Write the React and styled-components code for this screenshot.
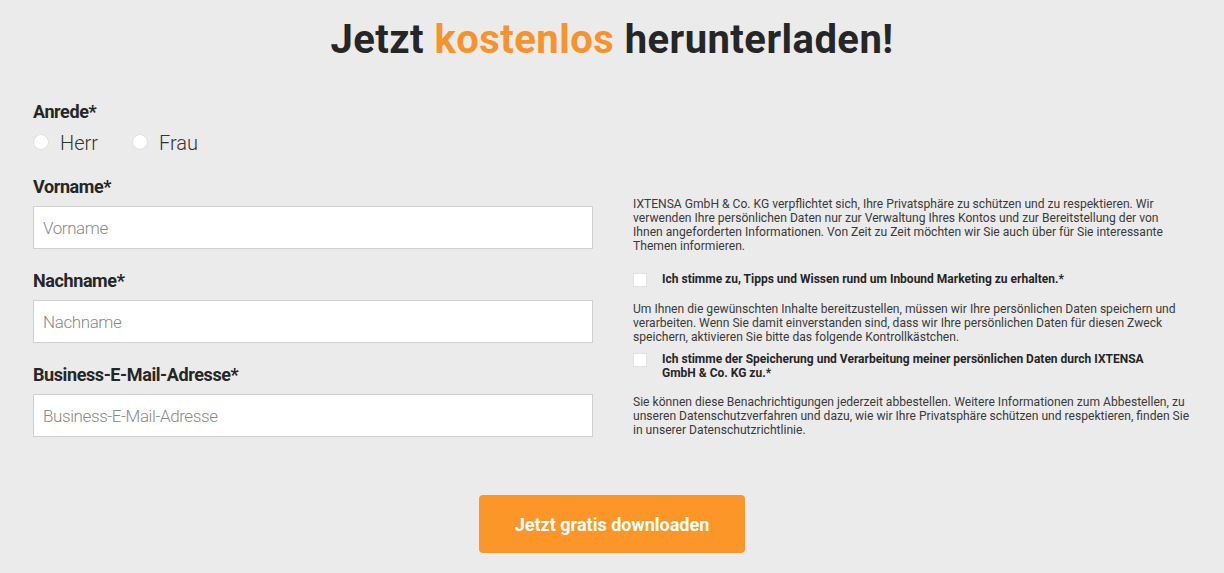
import styled, { createGlobalStyle } from 'styled-components'

const GlobalStyle = createGlobalStyle`
  html, body {
    margin: 0;
    padding: 0;
    background: #ebebeb;
  }
  body {
    font-family: Roboto, "Liberation Sans", sans-serif;
    color: #262626;
  }
`

function App() {
  return (
    <Page>
      <GlobalStyle />
      <Title>
        Jetzt <Accent>kostenlos</Accent> herunterladen!
      </Title>
      <Form>
        <Columns>
          <LeftColumn>
            <Field>
              <Label>Anrede*</Label>
              <RadioGroup>
                <RadioOption>
                  <Radio />
                  Herr
                </RadioOption>
                <RadioOption>
                  <Radio />
                  Frau
                </RadioOption>
              </RadioGroup>
            </Field>
            <Field>
              <Label>Vorname*</Label>
              <Input placeholder="Vorname" />
            </Field>
            <Field>
              <Label>Nachname*</Label>
              <Input placeholder="Nachname" />
            </Field>
            <Field>
              <Label>Business-E-Mail-Adresse*</Label>
              <Input placeholder="Business-E-Mail-Adresse" />
            </Field>
          </LeftColumn>
          <RightColumn>
            <Legal $after={19}>
              IXTENSA GmbH &amp; Co. KG verpflichtet sich, Ihre Privatsphäre zu schützen und zu respektieren. Wir
              verwenden Ihre persönlichen Daten nur zur Verwaltung Ihres Kontos und zur Bereitstellung der von Ihnen
              angeforderten Informationen. Von Zeit zu Zeit möchten wir Sie auch über für Sie interessante Themen
              informieren.
            </Legal>
            <Consent>
              <Checkbox />
              <ConsentText>Ich stimme zu, Tipps und Wissen rund um Inbound Marketing zu erhalten.*</ConsentText>
            </Consent>
            <Legal $after={8}>
              Um Ihnen die gewünschten Inhalte bereitzustellen, müssen wir Ihre persönlichen Daten speichern und
              verarbeiten. Wenn Sie damit einverstanden sind, dass wir Ihre persönlichen Daten für diesen Zweck
              speichern, aktivieren Sie bitte das folgende Kontrollkästchen.
            </Legal>
            <Consent>
              <Checkbox />
              <ConsentText>
                Ich stimme der Speicherung und Verarbeitung meiner persönlichen Daten durch IXTENSA GmbH &amp; Co. KG
                zu.*
              </ConsentText>
            </Consent>
            <Legal>
              Sie können diese Benachrichtigungen jederzeit abbestellen. Weitere Informationen zum Abbestellen, zu
              unseren Datenschutzverfahren und dazu, wie wir Ihre Privatsphäre schützen und respektieren, finden Sie in
              unserer Datenschutzrichtlinie.
            </Legal>
          </RightColumn>
        </Columns>
        <Actions>
          <SubmitButton type="button">Jetzt gratis downloaden</SubmitButton>
        </Actions>
      </Form>
    </Page>
  )
}

export default App

const Page = styled.div`
  min-height: 573px;
  padding: 16px 33px 0;
  box-sizing: border-box;
`

const Title = styled.h1`
  margin: 0;
  text-align: center;
  font-size: 40px;
  line-height: 48px;
  font-weight: 700;
  letter-spacing: 0.45px;
  color: #262626;
`

const Accent = styled.span`
  color: #f7932a;
`

const Form = styled.form`
  margin-top: 37px;
`

const Columns = styled.div`
  display: flex;
  align-items: flex-end;
  gap: 40px;
`

const LeftColumn = styled.div`
  width: 560px;
  flex-shrink: 0;
  display: flex;
  flex-direction: column;
  gap: 21px;
`

const RightColumn = styled.div`
  width: 560px;
  display: flex;
  flex-direction: column;
`

const Field = styled.div`
  display: flex;
  flex-direction: column;
  gap: 8px;
`

const Label = styled.label`
  font-size: 18px;
  line-height: 22px;
  font-weight: 700;
  letter-spacing: -0.4px;
  color: #262626;
`

const RadioGroup = styled.div`
  display: flex;
  gap: 34px;
`

const RadioOption = styled.label`
  display: flex;
  align-items: center;
  gap: 11px;
  font-size: 20px;
  line-height: 24px;
  font-weight: 300;
  color: #333;
`

const Radio = styled.span`
  width: 16px;
  height: 16px;
  margin-top: -3px;
  border-radius: 50%;
  background: #fff;
  box-shadow: inset 0 0 0 1px #ddd;
`

const Input = styled.input`
  box-sizing: border-box;
  width: 100%;
  height: 43px;
  padding: 0 9px;
  border: 1px solid #d0d0d0;
  background: #fff;
  font-family: inherit;
  font-size: 17px;
  font-weight: 300;
  letter-spacing: -0.4px;
  color: #333;
  outline: none;

  &::placeholder {
    color: #8a8a8a;
  }
`

const Legal = styled.p`
  margin: 0 0 ${(p) => p.$after ?? 0}px;
  font-size: 12.1px;
  line-height: 14px;
  color: #3a3a3a;
`

const Consent = styled.label`
  display: flex;
  align-items: flex-start;
  gap: 15px;
  margin-bottom: 15px;
`

const Checkbox = styled.span`
  flex-shrink: 0;
  width: 14px;
  height: 14px;
  margin-top: 1px;
  background: #fff;
  border: 1px solid #e2e2e2;
  box-sizing: border-box;
`

const ConsentText = styled.span`
  max-width: 482px;
  font-size: 12px;
  line-height: 14px;
  font-weight: 700;
  color: #262626;
`

const Actions = styled.div`
  display: flex;
  justify-content: center;
  padding-top: 58px;
`

const SubmitButton = styled.button`
  width: 266px;
  height: 58px;
  border: 0;
  border-radius: 4px;
  background: #fc9628;
  color: #fff;
  font-family: inherit;
  font-size: 18px;
  font-weight: 700;
  cursor: pointer;
`
